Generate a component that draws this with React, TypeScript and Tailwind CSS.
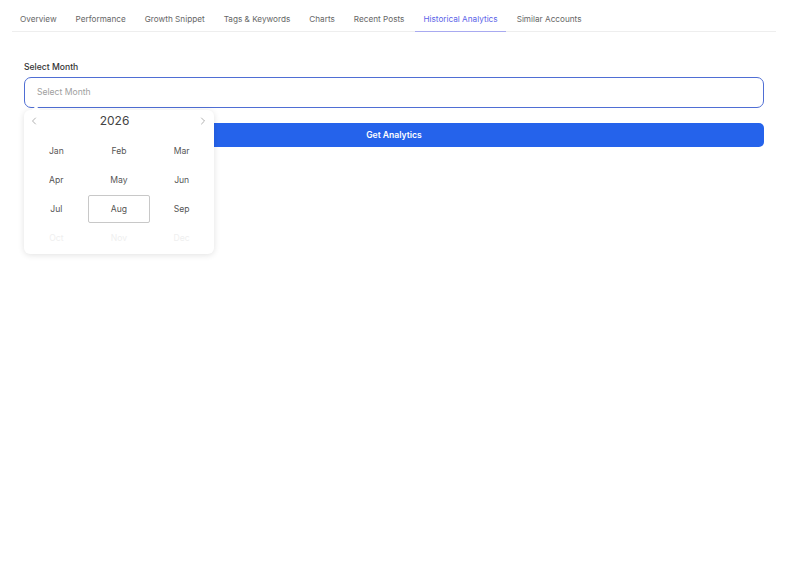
import React from "react";
import { ChevronLeft, ChevronRight } from "lucide-react";

const tabs = [
  "Overview",
  "Performance",
  "Growth Snippet",
  "Tags & Keywords",
  "Charts",
  "Recent Posts",
  "Historical Analytics",
  "Similar Accounts",
];

const months = ["Jan", "Feb", "Mar", "Apr", "May", "Jun", "Jul", "Aug", "Sep", "Oct", "Nov", "Dec"];

export default function App() {
  return (
    <div className="w-[800px] h-[573px] bg-white overflow-hidden" style={{ fontFamily: "Inter, 'Noto Sans', sans-serif" }}>
      <div className="ml-3 w-[764px] flex gap-[3px] border-b border-[#eeeeee]">
        {tabs.map((t) => {
          const active = t === "Historical Analytics";
          return (
            <div
              key={t}
              className={
                "px-2 pt-[13px] pb-[6px] text-[8.2px] leading-[12px] -mb-px border-b-[1.5px] " +
                (active ? "text-[#5b63e8] border-[#a8aaf0]" : "text-[#666666] border-transparent")
              }
            >
              {t}
            </div>
          );
        })}
      </div>

      <div className="pl-6 pr-9 pt-[29px]">
        <div className="text-[8.6px] leading-[12px] font-medium text-[#333]">Select Month</div>
        <div className="relative mt-[4px]">
          <div className="h-[31px] rounded-[7px] border-[1.5px] border-[#4f6ed4] flex items-center px-3 text-[8.6px] text-[#a0a0a0]">
            Select Month
          </div>
          <div className="absolute left-0 top-[33px] w-[190px] h-[144px] bg-white rounded-md shadow-[0_1px_6px_rgba(0,0,0,0.12)] z-10">
            <div className="absolute left-[9px] -top-[3px] w-[6px] h-[6px] bg-white rotate-45" />
            <div className="h-[22px] flex items-center justify-between pl-[4px] pr-[5px]">
              <ChevronLeft size={12} strokeWidth={1.2} color="#7a7a7a" />
              <span className="text-[12px] text-[#444] leading-none pr-[8px]">2026</span>
              <ChevronRight size={12} strokeWidth={1.2} color="#7a7a7a" />
            </div>
            <div className="grid grid-cols-3 gap-y-[1px] px-[1px] mt-[5px]">
              {months.map((m, i) => {
                const sel = m === "Aug";
                const faded = i >= 9;
                return (
                  <div
                    key={m}
                    className={
                      "h-[28px] flex items-center justify-center text-[8.6px] rounded-[2px] " +
                      (sel ? "border border-[#c8c8c8] " : "") +
                      (faded ? "text-[#efefef]" : "text-[#555]")
                    }
                  >
                    {m}
                  </div>
                );
              })}
            </div>
          </div>
        </div>
        <div className="mt-[15px] h-[24px] rounded-[5px] bg-[#2563eb] flex items-center justify-center text-white text-[8.6px] font-semibold">
          Get Analytics
        </div>
      </div>
    </div>
  );
}
